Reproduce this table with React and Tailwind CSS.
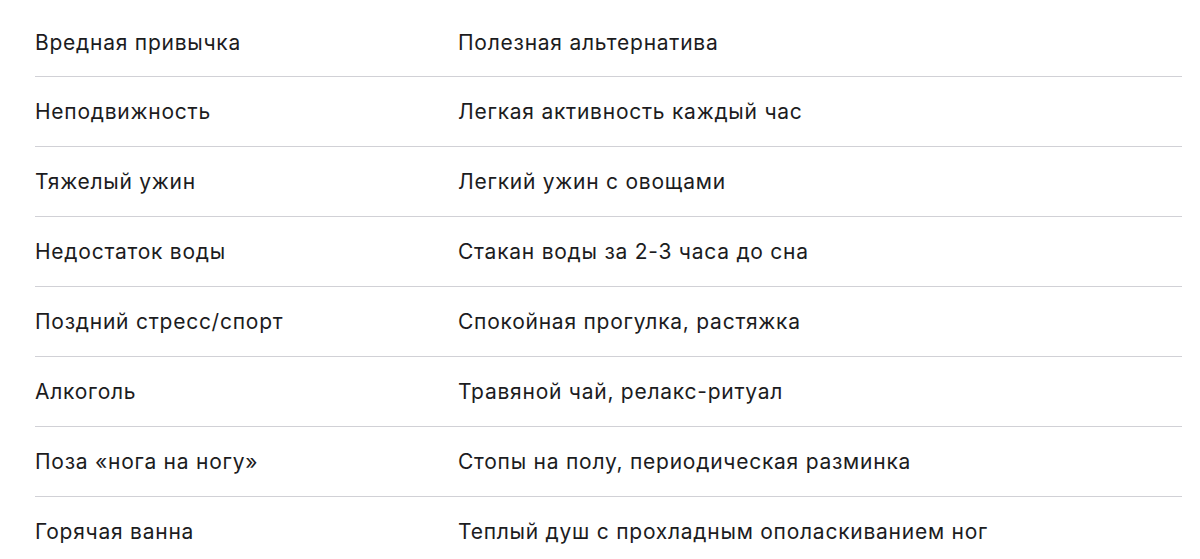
import React from "react";

const rows = [
  ["Неподвижность", "Легкая активность каждый час"],
  ["Тяжелый ужин", "Легкий ужин с овощами"],
  ["Недостаток воды", "Стакан воды за 2-3 часа до сна"],
  ["Поздний стресс/спорт", "Спокойная прогулка, растяжка"],
  ["Алкоголь", "Травяной чай, релакс-ритуал"],
  ["Поза «нога на ногу»", "Стопы на полу, периодическая разминка"],
  ["Горячая ванна", "Теплый душ с прохладным ополаскиванием ног"],
];

export default function App() {
  return (
    <div className="bg-white h-[559px] overflow-hidden pl-[35px] pr-[18px] pt-[10px] font-['Inter',sans-serif] text-[21px] tracking-[0.75px] text-[#1c1c1e]">
      <div className="flex items-center h-[67px] border-b border-[#d1d1d6]">
        <div className="w-[423px]">Вредная привычка</div>
        <div className="flex-1">Полезная альтернатива</div>
      </div>
      {rows.map(([bad, good]) => (
        <div key={bad} className="flex items-center h-[70px] border-b border-[#d1d1d6]">
          <div className="w-[423px]">{bad}</div>
          <div className="flex-1">{good}</div>
        </div>
      ))}
    </div>
  );
}
